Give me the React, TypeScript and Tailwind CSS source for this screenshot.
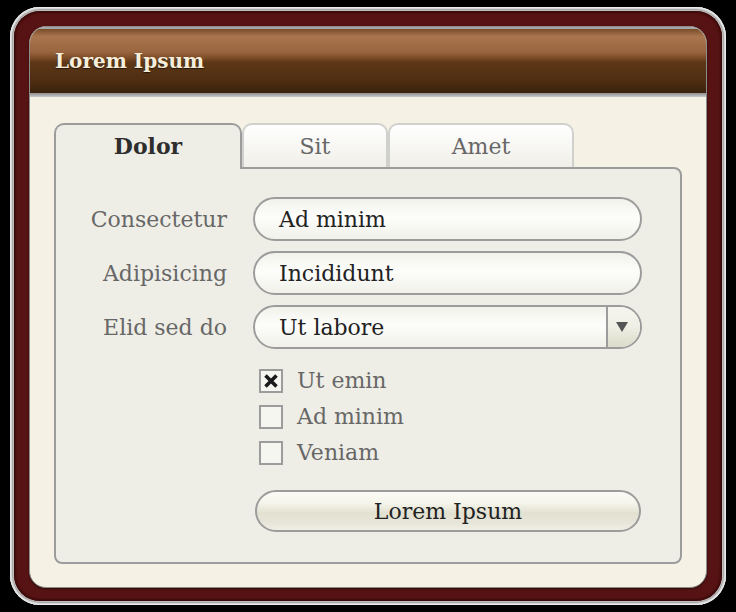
import React from 'react';

const serif = "font-['DejaVu_Serif',serif]";

const fields = [
  { label: 'Consectetur', value: 'Ad minim' },
  { label: 'Adipisicing', value: 'Incididunt' },
];

const checks = [
  { label: 'Ut emin', checked: true },
  { label: 'Ad minim', checked: false },
  { label: 'Veniam', checked: false },
];

const Checkbox: React.FC<{ label: string; checked: boolean }> = ({ label, checked }) => (
  <div className="flex items-center h-[24px] pl-[6px]">
    <div className="w-[24px] h-[24px] border-2 border-[#9c9c9c] bg-[#f6f6f1] flex items-center justify-center">
      {checked && (
        <svg width="16" height="16" viewBox="0 0 16 16">
          <path d="M2.5 2.5 L13.5 13.5 M13.5 2.5 L2.5 13.5" stroke="#1a1a1a" strokeWidth="3.6" strokeLinecap="butt" />
        </svg>
      )}
    </div>
    <span className="ml-[14px] text-[22px] leading-none text-[#676767]">{label}</span>
  </div>
);

export default function App() {
  return (
    <div className={`w-[736px] h-[612px] bg-black pt-[7px] pl-[10px] ${serif}`}>
      <div className="w-[716px] h-[598px] rounded-[30px] p-[4px] bg-[#bdbdbd] shadow-[inset_0_0_0_1px_#e9e9e9,inset_0_0_0_2px_#d6d6d6,inset_0_0_0_3px_#a9a9a9]">
        <div className="h-full rounded-[26px] bg-[#571313] pt-[15px] px-[15px] pb-[13px] shadow-[inset_0_0_2px_2px_#3c0a0a]">
          <div className="h-full rounded-[17px] border border-[#8c8c8c] bg-[#f5f2e5] overflow-hidden flex flex-col shadow-[0_1px_2px_rgba(0,0,0,0.5)]">
            <div className="h-[66px] shrink-0 flex items-center pl-[25px] border-t-2 border-[#a5a5a5] bg-[linear-gradient(to_bottom,#7a4c2a_0%,#a9754f_12%,#9a6640_35%,#7d4d29_45%,#5d3717_52%,#4f2e12_80%,#3a220d_100%)]">
              <span className="text-[20px] font-bold text-[#f6eeda] [text-shadow:0_1px_1px_rgba(0,0,0,0.6)]">Lorem Ipsum</span>
            </div>
            <div className="h-[4px] shrink-0 bg-[linear-gradient(to_bottom,#8e8e8e,#c9c9c9)]" />
            <div className="flex-1 flex flex-col pt-[26px] px-[24px] pb-[23px]">
              <div className="flex items-end h-[44px] relative z-10">
                <div className="w-[188px] h-[46px] -mb-[2px] rounded-t-[10px] border-2 border-b-0 border-[#9c9c9c] bg-[#efeee6] flex items-center justify-center">
                  <span className="text-[22px] font-bold text-[#2e2e2e] -mt-[1px]">Dolor</span>
                </div>
                <div className="w-[146px] h-[44px] rounded-t-[10px] border-2 border-b-0 border-[#d0d0cc] bg-[linear-gradient(to_bottom,#ffffff,#f0efe8)] flex items-center justify-center">
                  <span className="text-[22px] text-[#676767]">Sit</span>
                </div>
                <div className="w-[186px] h-[44px] rounded-t-[10px] border-2 border-b-0 border-[#d0d0cc] bg-[linear-gradient(to_bottom,#ffffff,#f0efe8)] flex items-center justify-center">
                  <span className="text-[22px] text-[#676767]">Amet</span>
                </div>
              </div>
              <div className="flex-1 rounded-b-[8px] rounded-tr-[8px] border-2 border-[#9c9c9c] bg-[#efeee6] pt-[28px]">
                <div className="grid grid-cols-[171px_389px] gap-x-[26px] gap-y-[10px] items-center">
                  {fields.map((f) => (
                    <React.Fragment key={f.label}>
                      <span className="text-right text-[22px] text-[#676767]">{f.label}</span>
                      <div className="h-[44px] rounded-[22px] border-2 border-[#9c9c9c] bg-[linear-gradient(to_bottom,#f2f2ec,#fdfdfb_45%,#f1f1ea)] flex items-center pl-[24px]">
                        <span className="text-[22px] text-[#222]">{f.value}</span>
                      </div>
                    </React.Fragment>
                  ))}
                  <span className="text-right text-[22px] text-[#676767]">Elid sed do</span>
                  <div className="h-[44px] rounded-[22px] border-2 border-[#9c9c9c] bg-[linear-gradient(to_bottom,#f2f2ec,#fdfdfb_45%,#f1f1ea)] flex items-stretch overflow-hidden">
                    <div className="flex-1 flex items-center pl-[24px]">
                      <span className="text-[22px] text-[#222]">Ut labore</span>
                    </div>
                    <div className="w-[34px] border-l-2 border-[#9c9c9c] bg-[linear-gradient(to_bottom,#f6f6f0,#eeeee4_50%,#dcdccb)] flex items-center justify-center pr-[4px]">
                      <svg width="12" height="10" viewBox="0 0 12 10">
                        <path d="M0 0 H12 L6 10 Z" fill="#555555" />
                      </svg>
                    </div>
                  </div>
                  <div />
                  <div className="flex flex-col gap-[12px] mt-[10px]">
                    {checks.map((c) => (
                      <Checkbox key={c.label} label={c.label} checked={c.checked} />
                    ))}
                  </div>
                  <div />
                  <div className="pl-[2px] mt-[15px]">
                    <button className="w-[386px] h-[42px] rounded-[21px] border-2 border-[#9c9c9c] bg-[linear-gradient(to_bottom,#fbfbf5_0%,#f4f4ea_30%,#e2e1d1_55%,#e6e5d8_80%,#f0efe6_100%)] text-[22px] text-[#222]">
                      Lorem Ipsum
                    </button>
                  </div>
                </div>
              </div>
            </div>
          </div>
        </div>
      </div>
    </div>
  );
}
